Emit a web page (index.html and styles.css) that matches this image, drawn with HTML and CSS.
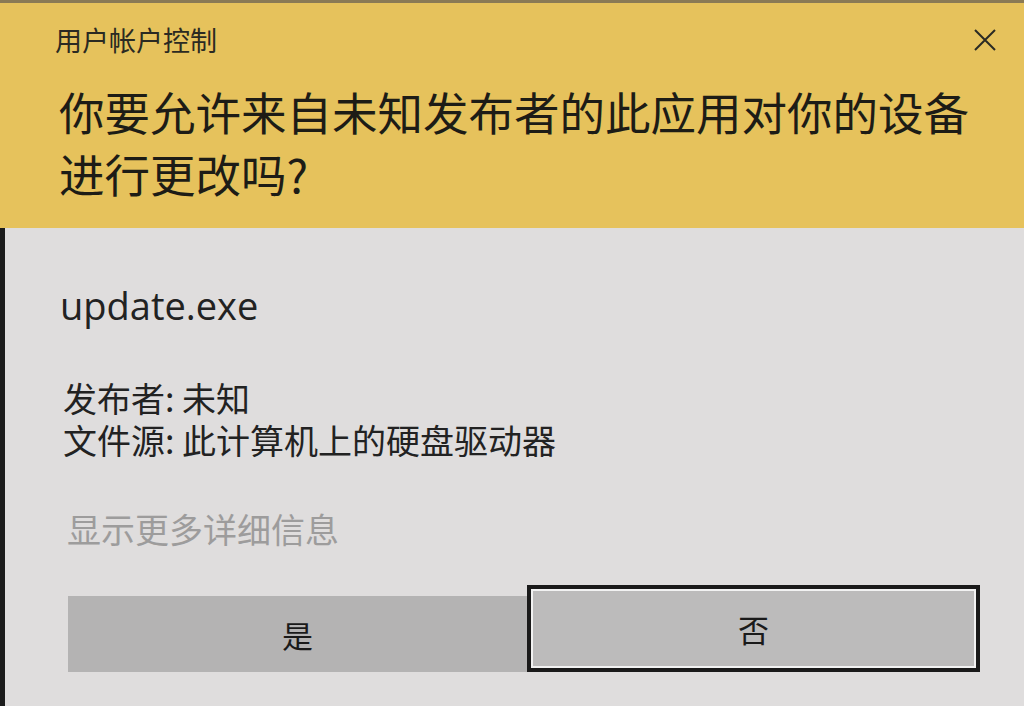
FILE: index.html
```html
<!DOCTYPE html>
<html lang="zh-CN">
<head>
<meta charset="utf-8">
<title>用户帐户控制</title>
<link rel="stylesheet" href="styles.css">
</head>
<body>
<div class="dialog">
  <header class="banner">
    <div class="title-row">
      <span class="title">用户帐户控制</span>
      <svg class="close" width="24" height="24" viewBox="0 0 24 24" aria-hidden="true">
        <path d="M2 2 L22 22 M22 2 L2 22" stroke="#2a2a24" stroke-width="2" fill="none"/>
      </svg>
    </div>
    <h1 class="question">你要允许来自未知发布者的此应用对你的设备<br>进行更改吗?</h1>
  </header>
  <main class="content">
    <div class="program">update.exe</div>
    <div class="details">
      <div class="line">发布者: 未知</div>
      <div class="line">文件源: 此计算机上的硬盘驱动器</div>
    </div>
    <div class="more">显示更多详细信息</div>
    <div class="buttons">
      <div class="btn btn-yes">是</div>
      <div class="btn btn-no">否</div>
    </div>
  </main>
</div>
</body>
</html>
```

FILE: styles.css
```css
html, body {
  margin: 0;
  padding: 0;
}
body {
  width: 1024px;
  height: 706px;
  overflow: hidden;
  background: #dedcdc;
  font-family: "Noto Sans CJK SC", "Noto Sans", sans-serif;
  color: #1f1f1f;
}
.dialog {
  display: flex;
  flex-direction: column;
  height: 706px;
}
.banner {
  background: #e6c25c;
  border-top: 3px solid #8a7a55;
  padding: 21px 0 21px 0;
  height: 183px;
}
.title-row {
  display: flex;
  align-items: center;
  justify-content: space-between;
  padding: 0 27px 0 55px;
  height: 32px;
}
.title {
  font-size: 27px;
  line-height: 32px;
  color: #2b2a22;
}
.close {
  display: block;
}
.question {
  margin: 24px 0 0 59px;
  font-weight: normal;
  font-size: 45.5px;
  line-height: 62px;
  color: #1d1c16;
  letter-spacing: 0;
}
.content {
  flex: 1;
  border-left: 5px solid #1b1b1b;
  padding: 52px 44px 0 55px;
  background: #dfdddd;
}
.program {
  font-family: "Open Sans", "Noto Sans", sans-serif;
  font-size: 38px;
  line-height: 50px;
  color: #222;
}
.details {
  margin-top: 47px;
  margin-left: 3px;
  display: flex;
  flex-direction: column;
  font-size: 34px;
  line-height: 42px;
  color: #222;
}
.line {
  height: 42px;
}
.more {
  margin-top: 47px;
  margin-left: 7px;
  font-size: 34px;
  line-height: 42px;
  color: #9d9c9c;
}
.buttons {
  display: flex;
  margin-top: 35px;
  margin-left: 8px;
  height: 87px;
}
.btn {
  display: flex;
  align-items: center;
  justify-content: center;
  font-size: 31px;
  color: #1a1a1a;
  box-sizing: border-box;
}
.btn-yes {
  width: 459px;
  background: #b4b3b3;
  margin-top: 11px;
}
.btn-no {
  flex: 1;
  background: #bcbbbb;
  border: 4px solid #1a1a1a;
  box-shadow: inset 0 0 0 2px #f2f2f2;
}
```
